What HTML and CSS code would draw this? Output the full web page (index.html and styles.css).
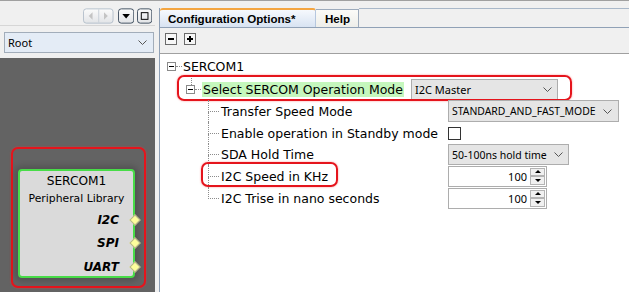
FILE: index.html
```html
<!DOCTYPE html>
<html lang="en">
<head>
    <meta charset="UTF-8">
    <title>Configuration Options</title>
    <link rel="stylesheet" href="styles.css">
</head>
<body>
<div class="window">
    <aside class="graph-pane">
        <div class="graph-tools">
            <svg class="nav-pair" width="32" height="16" viewBox="0 0 32 16">
                <defs>
                    <linearGradient id="btnFill" x1="0" y1="0" x2="0" y2="1">
                        <stop offset="0" stop-color="#fbfbfb"/>
                        <stop offset="1" stop-color="#e2e4e7"/>
                    </linearGradient>
                </defs>
                <rect x="0.5" y="0.5" width="31" height="15" rx="3" fill="url(#btnFill)" stroke="#b4c0cc"/>
                <line x1="16.5" y1="1" x2="16.5" y2="15" stroke="#c8d0d8"/>
                <polygon points="10,4 6,8 10,12" fill="#c4c4c4"/>
                <polygon points="22,4 26,8 22,12" fill="#c4c4c4"/>
            </svg>
            <svg class="tool-btn" width="17" height="16" viewBox="0 0 17 16">
                <rect x="0.5" y="0.5" width="16" height="15" rx="3" fill="url(#btnFill)" stroke="#3f4f60"/>
                <polygon points="4.5,6 12.5,6 8.5,10.5" fill="#000"/>
            </svg>
            <svg class="tool-btn" width="16" height="16" viewBox="0 0 16 16">
                <rect x="0.5" y="0.5" width="15" height="15" rx="3" fill="url(#btnFill)" stroke="#3f4f60"/>
                <rect x="4.5" y="4.5" width="7" height="7" fill="none" stroke="#000"/>
            </svg>
        </div>
        <div class="scope-row">
            <div class="scope-combo">
                <span>Root</span>
                <svg class="chevron" width="9" height="5" viewBox="0 0 9 5"><polyline points="0.5,0.5 4.5,4.5 8.5,0.5" fill="none" stroke="#555"/></svg>
            </div>
        </div>
        <div class="canvas">
            <div class="node-mark">
                <div class="node">
                    <div class="node-title">SERCOM1</div>
                    <div class="node-sub">Peripheral Library</div>
                    <div class="port"><span>I2C</span><i class="pin"></i></div>
                    <div class="port"><span>SPI</span><i class="pin"></i></div>
                    <div class="port"><span>UART</span><i class="pin"></i></div>
                </div>
            </div>
        </div>
    </aside>

    <section class="config-pane">
        <div class="tabs">
            <div class="tab tab-active">Configuration Options*</div>
            <div class="tab">Help</div>
            <div class="tab-fill"></div>
        </div>
        <div class="toolbar">
            <svg class="small-btn" width="12" height="12" viewBox="0 0 12 12">
                <rect x="0.5" y="0.5" width="11" height="11" fill="#f6f6f6" stroke="#6a6a6a"/>
                <rect x="3" y="5" width="6" height="2" fill="#000"/>
            </svg>
            <svg class="small-btn" width="12" height="12" viewBox="0 0 12 12">
                <rect x="0.5" y="0.5" width="11" height="11" fill="#f6f6f6" stroke="#6a6a6a"/>
                <rect x="3" y="5" width="6" height="2" fill="#000"/>
                <rect x="5" y="3" width="2" height="6" fill="#000"/>
            </svg>
        </div>

        <div class="tree">
            <div class="row row-root">
                <svg class="toggle" width="9" height="9" viewBox="0 0 9 9">
                    <rect x="0.5" y="0.5" width="8" height="8" fill="#fff" stroke="#8a8a8a"/>
                    <line x1="2" y1="4.5" x2="7" y2="4.5" stroke="#000"/>
                </svg>
                <span class="hline"></span>
                <span class="label">SERCOM1</span>
            </div>

            <div class="row row-group">
                <div class="cell">
                    <div class="toggle-col">
                        <span class="stem"></span>
                        <svg class="toggle" width="9" height="9" viewBox="0 0 9 9">
                            <rect x="0.5" y="0.5" width="8" height="8" fill="#fff" stroke="#8a8a8a"/>
                            <line x1="2" y1="4.5" x2="7" y2="4.5" stroke="#000"/>
                        </svg>
                    </div>
                    <span class="hline"></span>
                    <span class="label label-selected">Select SERCOM Operation Mode</span>
                </div>
                <div class="combo combo-mode">
                    <span>I2C Master</span>
                    <svg class="chevron" width="9" height="5" viewBox="0 0 9 5"><polyline points="0.5,0.5 4.5,4.5 8.5,0.5" fill="none" stroke="#555"/></svg>
                </div>
                <div class="mark mark-mode"></div>
            </div>

            <div class="row row-leaf">
                <div class="cell">
                    <span class="branch"><i></i><i></i></span>
                    <span class="label">Transfer Speed Mode</span>
                </div>
                <div class="combo combo-speed">
                    <span>STANDARD_AND_FAST_MODE</span>
                    <svg class="chevron" width="9" height="5" viewBox="0 0 9 5"><polyline points="0.5,0.5 4.5,4.5 8.5,0.5" fill="none" stroke="#555"/></svg>
                </div>
            </div>

            <div class="row row-leaf">
                <div class="cell">
                    <span class="branch"><i></i><i></i></span>
                    <span class="label">Enable operation in Standby mode</span>
                </div>
                <span class="check"></span>
            </div>

            <div class="row row-leaf row-short">
                <div class="cell">
                    <span class="branch"><i></i><i></i></span>
                    <span class="label">SDA Hold Time</span>
                </div>
                <div class="combo combo-hold">
                    <span>50-100ns hold time</span>
                    <svg class="chevron" width="9" height="5" viewBox="0 0 9 5"><polyline points="0.5,0.5 4.5,4.5 8.5,0.5" fill="none" stroke="#555"/></svg>
                </div>
            </div>

            <div class="row row-leaf">
                <div class="cell">
                    <span class="branch"><i></i><i></i></span>
                    <span class="label">I2C Speed in KHz</span>
                </div>
                <div class="spinner">
                    <span class="value">100</span>
                    <span class="arrows"><b class="up"></b><b class="down"></b></span>
                </div>
                <div class="mark mark-speed"></div>
            </div>

            <div class="row row-leaf row-last">
                <div class="cell">
                    <span class="branch"><i></i><i></i></span>
                    <span class="label">I2C Trise in nano seconds</span>
                </div>
                <div class="spinner">
                    <span class="value">100</span>
                    <span class="arrows"><b class="up"></b><b class="down"></b></span>
                </div>
            </div>
        </div>
    </section>
</div>
</body>
</html>
```

FILE: styles.css
```css
* {
    box-sizing: border-box;
}
body {
    margin: 0;
    background-color: #f0f0f0;
    font-family: "DejaVu Sans", Verdana, sans-serif;
    color: #000;
}
.window {
    width: 629px;
    height: 292px;
    border-top: 1px solid #a0a0a0;
    display: flex;
    overflow: hidden;
}

/* left pane */
.graph-pane {
    width: 155px;
    flex: none;
    display: flex;
    flex-direction: column;
}
.graph-tools {
    height: 25px;
    border-bottom: 1px solid #d6d6d6;
    display: flex;
    align-items: flex-start;
    padding: 7px 0 0 83px;
}
.graph-tools svg {
    display: block;
}
.nav-pair {
    margin-right: 4px;
}
.tool-btn {
    margin-right: 3px;
}
.scope-row {
    height: 32px;
    padding: 6px 1px 0 4px;
}
.scope-combo {
    height: 21px;
    border: 1px solid #a2adba;
    background-color: #e4ecf6;
    display: flex;
    align-items: center;
    justify-content: space-between;
    padding: 0 6px 0 3px;
    font-family: "Noto Sans", sans-serif;
    font-size: 11px;
}
.canvas {
    flex: 1;
    background-color: #636363;
    padding: 89px 0 0 11px;
}
.node-mark {
    width: 135px;
    height: 141px;
    border: 2px solid #e5141c;
    border-radius: 7px;
    box-shadow: 0 0 2px rgba(255, 60, 60, 0.6);
    padding: 20px 9px 0 5px;
}
.node {
    height: 109px;
    width: 117px;
    background-color: #dadada;
    border: 2px solid #48dc48;
    border-radius: 4px;
    box-shadow: 0 0 6px 3px rgba(0, 0, 0, 0.18);
    padding-top: 1px;
}
.node-title {
    text-align: center;
    font-size: 12.2px;
    line-height: 18px;
}
.node-sub {
    text-align: center;
    font-size: 10.8px;
    line-height: 18px;
}
.port {
    height: 23.5px;
    display: flex;
    align-items: center;
    justify-content: flex-end;
    font-size: 12px;
    font-weight: bold;
    font-style: italic;
}
.pin {
    width: 8px;
    height: 8px;
    margin: 0 -6px 0 12px;
    background-color: #fdfd9c;
    border: 1px solid #b4b48a;
    transform: rotate(45deg);
}

/* right pane */
.config-pane {
    flex: 1;
    margin: 7px 0 0 4px;
    border-left: 1px solid #8e9fb5;
    display: flex;
    flex-direction: column;
}
.tabs {
    height: 20px;
    display: flex;
    align-items: flex-end;
    border-bottom: 1px solid #90a1b6;
}
.tab {
    height: 18px;
    padding: 2px 8px 0 9px;
    font-family: "Liberation Sans", Arial, sans-serif;
    font-size: 11.6px;
    font-weight: bold;
    background: linear-gradient(#fbfbf8, #eeeeea);
    border-top: 1px solid #9caabb;
    border-right: 1px solid #9caabb;
}
.tab-active {
    width: 156px;
    height: 19px;
    padding-left: 8px;
    border-top: 2px solid #f4a540;
    border-radius: 3px 3px 0 0;
    border-right-color: #b6c7de;
    background: linear-gradient(#f6f9fd, #d8e3f2);
}
.tab-fill {
    flex: 1;
    align-self: stretch;
    border-top: 1px solid #a9b8c9;
}
.toolbar {
    height: 26px;
    border-bottom: 1px solid #a0a0a0;
    display: flex;
    gap: 7px;
    padding: 5px 0 0 5px;
}
.toolbar svg {
    display: block;
}
.tree {
    flex: 1;
    background-color: #fff;
    padding-top: 1px;
    font-size: 12.5px;
}

/* tree rows */
.row {
    position: relative;
    height: 22px;
    display: flex;
    align-items: center;
}
.row-root {
    height: 23px;
    padding-left: 7px;
}
.row-short {
    height: 21px;
}
.cell {
    height: 100%;
    display: flex;
    align-items: center;
    flex: none;
}
.row-group .cell {
    width: 251px;
    padding-left: 26px;
    align-items: flex-start;
}
.row-leaf .cell {
    width: 288px;
    padding-left: 48px;
}
.toggle {
    display: block;
    flex: none;
}
.toggle-col {
    display: flex;
    flex-direction: column;
    align-items: center;
    width: 9px;
}
.stem {
    width: 1px;
    height: 7px;
    border-left: 1px dotted #8c8c8c;
    margin-left: 1px;
}
.hline {
    width: 6px;
    border-top: 1px dotted #8c8c8c;
    margin-right: 1px;
}
.row-group .hline {
    margin-top: 11px;
}
.label {
    white-space: nowrap;
    line-height: 15px;
}
.label-selected {
    margin-top: 4px;
    padding: 0 1px;
    background-color: #c5f7bd;
}
.branch {
    width: 11px;
    height: 100%;
    display: flex;
    flex-direction: column;
    margin-right: 2px;
}
.branch i {
    flex: 1;
    border-left: 1px dotted #8c8c8c;
}
.branch i:first-child {
    border-bottom: 1px dotted #8c8c8c;
}
.row-last .branch i:last-child {
    border-left: none;
}

/* editors */
.combo {
    height: 21px;
    border: 1px solid #adadad;
    background-color: #e5e5e5;
    display: flex;
    align-items: center;
    justify-content: space-between;
    padding: 0 5px 0 3px;
    font-family: "Noto Sans", sans-serif;
    font-size: 11px;
    white-space: nowrap;
}
.chevron {
    display: block;
    flex: none;
}
.combo-mode {
    width: 147px;
}
.combo-speed {
    width: 171px;
    height: 22px;
    padding-right: 6px;
    font-size: 10.4px;
}
.combo-hold {
    width: 121px;
    font-size: 10.5px;
}
.check {
    width: 13px;
    height: 13px;
    border: 1px solid #333;
    background-color: #fff;
}
.spinner {
    width: 99px;
    height: 21px;
    border: 1px solid #adadad;
    background-color: #fff;
    display: flex;
    justify-content: flex-end;
    align-items: stretch;
    font-family: "Noto Sans", sans-serif;
    font-size: 11px;
}
.spinner .value {
    align-self: center;
    padding-right: 3px;
}
.arrows {
    width: 16px;
    display: flex;
    flex-direction: column;
    padding: 1px 1px 1px 0;
}
.arrows b {
    flex: 1;
    border: 1px solid #b4b4b4;
    background-color: #f0f0f0;
    display: flex;
    align-items: center;
    justify-content: center;
}
.arrows b::after {
    content: "";
    border-left: 3px solid transparent;
    border-right: 3px solid transparent;
}
.arrows .up::after {
    border-bottom: 3px solid #000;
}
.arrows .down::after {
    border-top: 3px solid #000;
}

/* annotation marks */
.mark {
    position: absolute;
    border: 2px solid #e5141c;
    border-radius: 7px;
    box-shadow: 0 0 2px rgba(255, 60, 60, 0.6);
}
.mark-mode {
    left: 17px;
    top: -3px;
    width: 395px;
    height: 26px;
}
.mark-speed {
    left: 41px;
    top: -3px;
    width: 137px;
    height: 25px;
}
```
